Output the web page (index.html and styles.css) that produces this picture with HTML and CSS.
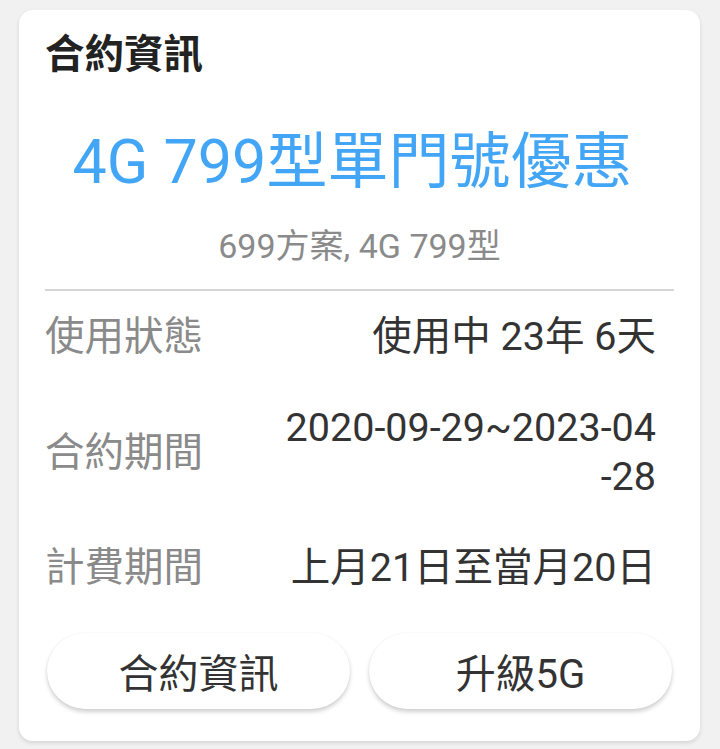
FILE: index.html
```html
<!DOCTYPE html>
<html lang="zh-Hant">
<head>
    <meta charset="UTF-8">
    <meta name="viewport" content="width=device-width, initial-scale=1.0">
    <title>合約資訊</title>
    <link rel="stylesheet" href="styles.css">
</head>
<body>
    <div class="card">
        <h2 class="card-title">合約資訊</h2>
        <div class="plan-name">4G 799型單門號優惠</div>
        <div class="plan-sub">699方案, 4G 799型</div>
        <hr class="divider">
        <div class="info-row">
            <div class="info-label">使用狀態</div>
            <div class="info-value">使用中 23年 6天</div>
        </div>
        <div class="info-row">
            <div class="info-label">合約期間</div>
            <div class="info-value">2020-09-29~2023-04<br>-28</div>
        </div>
        <div class="info-row">
            <div class="info-label">計費期間</div>
            <div class="info-value">上月21日至當月20日</div>
        </div>
        <div class="button-container">
            <button>合約資訊</button>
            <button>升級5G</button>
        </div>
    </div>
</body>
</html>
```

FILE: styles.css
```css
body {
    margin: 0;
    background-color: #f1f1f1;
    font-family: Roboto, "Noto Sans CJK TC", sans-serif;
    color: #333;
}
.card {
    margin: 10px 20px 7px 19px;
    background-color: white;
    border-radius: 14px;
    box-shadow: 0 2px 4px rgba(0, 0, 0, 0.12);
    padding: 21px 26px 32px 26px;
}
.card-title {
    margin: 0;
    font-size: 39.5px;
    line-height: 48px;
    font-weight: bold;
    color: #222;
}
.plan-name {
    margin-top: 47px;
    padding-right: 14px;
    text-align: center;
    font-size: 61px;
    line-height: 72px;
    color: #42a5f5;
}
.plan-sub {
    margin-top: 28px;
    text-align: center;
    font-size: 34px;
    line-height: 40px;
    color: #8a8a8a;
}
.divider {
    margin: 23px 0 0 0;
    border: none;
    height: 2px;
    background-color: #d6d6d6;
}
.info-row {
    display: flex;
    justify-content: space-between;
    align-items: center;
    padding: 21px 18px 21px 0;
    font-size: 39.5px;
    line-height: 49px;
}
.info-label {
    color: #8a8a8a;
    white-space: nowrap;
}
.info-value {
    text-align: right;
    color: #333;
}
.button-container {
    display: flex;
    gap: 19px;
    margin-top: 20px;
    padding: 0 2px;
}
button {
    flex: 1;
    height: 76px;
    border: none;
    border-radius: 38px;
    background-color: white;
    box-shadow: 0 3px 4px rgba(0, 0, 0, 0.18), 0 0 2px rgba(0, 0, 0, 0.06);
    font-family: Roboto, "Noto Sans CJK TC", sans-serif;
    font-size: 40px;
    color: #333;
    cursor: pointer;
}
```
